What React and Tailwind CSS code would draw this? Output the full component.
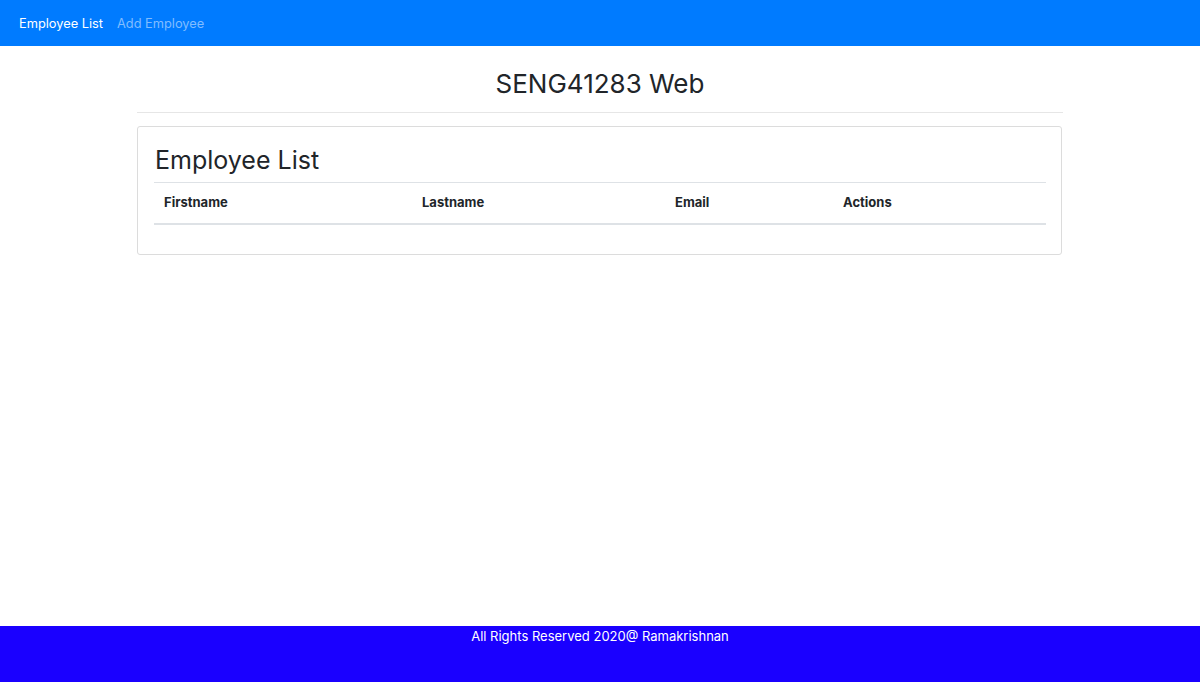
export default function App() {
  const font = { fontFamily: "Inter, 'Liberation Sans', sans-serif" };
  return (
    <div className="min-h-screen flex flex-col bg-white text-[#212529]" style={font}>
      <nav className="h-[46px] bg-[#007bff] flex items-center px-[19px] pt-[2px] gap-[14px] text-[12.8px] shrink-0">
        <span className="text-white">Employee List</span>
        <span className="text-[#80bdff]">Add Employee</span>
      </nav>
      <main className="flex-1">
        <div className="w-[926px] mx-auto">
          <h1 className="mt-[22px] text-center text-[26px] leading-[31px] font-normal">SENG41283 Web</h1>
          <hr className="mt-[13px] border-0 border-t border-[#e6e6e6]" />
          <div className="mt-[13px] mr-px border border-[#dcdcdc] rounded-[3px] p-4">
            <h2 className="text-[25px] leading-[31px] font-normal mt-[2px] mb-[6px] pl-px">Employee List</h2>
            <table className="table-fixed w-full border-collapse text-[13px] mb-[13px]">
              <colgroup>
                <col className="w-[258px]" />
                <col className="w-[253px]" />
                <col className="w-[168px]" />
                <col className="w-[213px]" />
              </colgroup>
              <thead>
                <tr className="border-t border-[#dee2e6] border-b-2 border-b-[#dee2e6]">
                  <th className="text-left font-bold px-[10px] pt-[10px] pb-[11px] leading-[19px]">Firstname</th>
                  <th className="text-left font-bold px-[10px] pt-[10px] pb-[11px] leading-[19px]">Lastname</th>
                  <th className="text-left font-bold px-[10px] pt-[10px] pb-[11px] leading-[19px]">Email</th>
                  <th className="text-left font-bold px-[10px] pt-[10px] pb-[11px] leading-[19px]">Actions</th>
                </tr>
              </thead>
              <tbody></tbody>
            </table>
          </div>
        </div>
      </main>
      <footer className="h-[56px] bg-[#1a00ff] text-white text-center text-[13px] leading-[19px] pt-px shrink-0">
        All Rights Reserved 2020@ Ramakrishnan
      </footer>
    </div>
  );
}
